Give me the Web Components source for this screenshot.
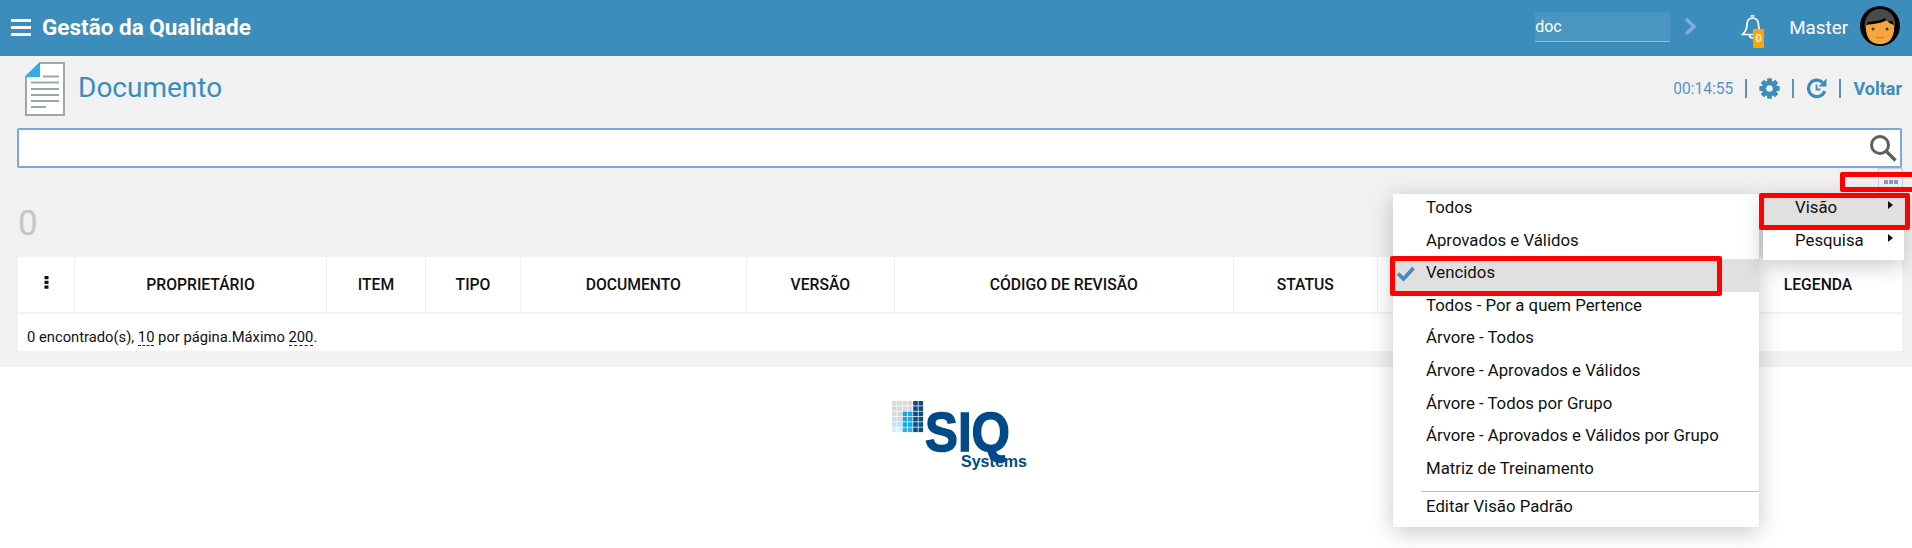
<!DOCTYPE html>
<html lang="pt"><head><meta charset="utf-8"><title>Documento</title>
<style>
html,body{margin:0;padding:0;background:#fff;font-family:Roboto,"Liberation Sans",sans-serif;color:#111;overflow:hidden}
body{width:1912px;height:548px;position:relative}
</style></head><body>
<app-header></app-header>
<gray-area>
  <title-bar></title-bar>
  <search-bar></search-bar>
  <dots-bar></dots-bar>
  <count-label>0</count-label>
  <data-table></data-table>
</gray-area>
<site-footer></site-footer>
<drop-menu id="m1" style="--l:1393px;--t:194px;--w:366px"></drop-menu>
<drop-menu id="m2" style="--l:1763px;--t:194px;--w:141px"></drop-menu>
<red-box style="--l:1840px;--t:172px;--w:80px;--h:20px"></red-box>
<red-box style="--l:1759px;--t:193px;--w:151px;--h:37px"></red-box>
<red-box style="--l:1390px;--t:256px;--w:332px;--h:40px"></red-box>
<script>
function def(name,html,init){
  customElements.define(name,class extends HTMLElement{
    constructor(){super();this.attachShadow({mode:'open'}).innerHTML=html;}
    connectedCallback(){if(init)init(this);}
  });
}
def('app-header',`<style>
:host{display:flex;align-items:center;height:56px;background:#3c8dbc;color:#fff;padding:0 12px 0 11px;box-sizing:border-box}
.brand{font:700 22.500px Roboto,sans-serif;margin-left:11px;white-space:nowrap;position:relative;top:-1px}
.sp{flex:1}
.inp{width:135px;height:30px;box-sizing:border-box;background:rgba(255,255,255,.08);border-bottom:1px solid #8fbbe6;font:400 16px/30px Roboto,sans-serif;margin-top:-3px}
svg{display:block}
.ch{margin:-4px 0 0 15px}
.bell{position:relative;margin:8px 0 0 44px;width:24px;height:34px}
.badge{position:absolute;left:12px;top:14px;width:11px;height:19px;background:#ffa500;border-radius:1px;font:500 11px/19px Roboto,sans-serif;text-align:center}
.name{font:400 18.800px Roboto,sans-serif;margin:-1px 12px 0 24px}
.av{margin-top:-4px}
</style>
<svg width="20" height="17" viewBox="0 0 20 17" style="margin-top:-2px"><path d="M0 0h20v3H0zM0 7h20v3H0zM0 14h20v3H0z" fill="#fff"/></svg>
<span class="brand">Gestão da Qualidade</span><span class="sp"></span>
<div class="inp">doc</div>
<svg class="ch" width="12" height="17" viewBox="0 0 12 17"><path d="M1 1l8 7.500l-8 7.500" fill="none" stroke="#82abdc" stroke-width="3.400"/></svg>
<div class="bell"><svg width="24" height="26" viewBox="0 0 24 26"><path d="M10 1.500a1.800 1.800 0 0 1 3 0M11.500 3c-4 0-5.500 3-5.500 7c0 5-2 7-4.500 9.500h20c-2.500-2.500-4-4.500-4-9.500c0-4-2-7-6-7zM8.500 20a3 3 0 0 0 6 0" fill="none" stroke="#fff" stroke-width="1.700"/></svg><span class="badge">0</span></div>
<span class="name">Master</span>
<svg class="av" width="40" height="40" viewBox="0 0 40 40"><circle cx="20" cy="20" r="20" fill="#050505"/><path d="M6 25C8 36 14 38 20 38s12-2 14-13v-6c-4-1-6-3-7-5c-5 3-13 4-21 5z" fill="#f5a73f"/><path d="M5 23c-2-12 6-20 15-20s17 7 15 20c-1-3-2-6-3-8c-5 1-6-1-7-3c-5 3-11 3-17 4c-1 2-2 4-3 7z" fill="#4a4a4c"/><circle cx="13" cy="23" r="1.500" fill="#5a3410"/><circle cx="27" cy="23" r="1.500" fill="#5a3410"/><path d="M16 31q4 2 8 0" fill="none" stroke="#c9771d" stroke-width="1.200"/></svg>`);

def('gray-area',`<style>:host{display:block;background:#f1f1f1;height:311px;box-sizing:border-box}</style><slot></slot>`);

def('title-bar',`<style>
:host{display:flex;align-items:center;height:72px;box-sizing:border-box;padding:0 10px 9px 25px;color:#3c8dbc}
.t{font:400 28px Roboto,sans-serif;margin-left:13px}
.sp{flex:1}
.time{font:400 15.600px Roboto,sans-serif;color:#5a94c6}
.sep{width:2px;height:19px;background:#5a94c6;margin:0 12px}
.v{font:700 18px Roboto,sans-serif}
svg{display:block}
.r{display:flex;align-items:center;margin-top:2px}
</style>
<svg width="40" height="54" viewBox="0 0 40 54" style="margin-top:3px"><path d="M1 14.500L15 1h24v52H1z" fill="#fff" stroke="#9ba8ae" stroke-width="2"/><path d="M0 15L15 0v15z" fill="#2eaee6"/><path d="M18 14.500h16M6 20.500h28M6 27h28M6 33h28M6 39h28M6 45h15" stroke="#9aa6ab" stroke-width="2"/></svg>
<span class="t">Documento</span><span class="sp"></span>
<div class="r"><span class="time">00:14:55</span><i class="sep"></i>
<svg width="21" height="21" viewBox="-10.500 -10.500 21 21"><g fill="#3c8dbc"><circle r="7.800"/><rect x="-2.400" y="-10.200" width="4.800" height="20.400" rx=".8"/><rect x="-2.400" y="-10.200" width="4.800" height="20.400" rx=".8" transform="rotate(45)"/><rect x="-2.400" y="-10.200" width="4.800" height="20.400" rx=".8" transform="rotate(90)"/><rect x="-2.400" y="-10.200" width="4.800" height="20.400" rx=".8" transform="rotate(135)"/></g><circle r="3.300" fill="#f1f1f1"/></svg><i class="sep"></i>
<svg width="21" height="21" viewBox="0 0 21 21"><path d="M16.500 4.300A8.300 8.300 0 1 0 18.700 13" fill="none" stroke="#3c8dbc" stroke-width="3.200"/><path d="M20.500 0.500v8h-8z" fill="#3c8dbc"/><path d="M10.500 6.500v5h4" fill="none" stroke="#3c8dbc" stroke-width="1.800"/></svg><i class="sep"></i>
<span class="v">Voltar</span></div>`);

def('search-bar',`<style>
:host{display:flex;justify-content:flex-end;align-items:center;height:40px;box-sizing:border-box;margin:0 10px 0 17px;background:#fff;border:2px solid #7fa6e0;border-radius:2px;padding-right:3px}
svg{display:block}
</style><svg width="28" height="28" viewBox="0 0 28 28"><circle cx="11" cy="11" r="8.500" fill="none" stroke="#5f5f5f" stroke-width="3"/><path d="M17 17l9.500 9.500" stroke="#5f5f5f" stroke-width="3.400"/></svg>`);

def('dots-bar',`<style>
:host{display:flex;justify-content:flex-end;height:26px;margin-right:9px}
.b{width:25px;box-sizing:border-box;border:1px solid #cfcfcf;border-width:1px 1px 0 1px;display:flex;align-items:center;justify-content:center;gap:1px}
i{width:4px;height:4px;background:#7f9fc4}
</style><div class="b"><i></i><i></i><i></i></div>`);

def('count-label',`<style>:host{display:block;height:63px;box-sizing:border-box;padding:9px 0 0 18px;font:400 35px/42px Roboto,sans-serif;color:#c6c6c6}</style><slot></slot>`);

const cols=[['',57],['PROPRIETÁRIO',252],['ITEM',99],['TIPO',95],['DOCUMENTO',225.5],['VERSÃO',148.5],['CÓDIGO DE REVISÃO',338.5],['STATUS',144.5],['',356],['LEGENDA',168]];
def('data-table',`<style>
:host{display:block;margin:0 10px 0 18px;font-family:Roboto,sans-serif}
.h{display:grid;grid-template-columns:${cols.map(c=>c[1]+'px').join(' ')};height:55px;background:#fff;margin-bottom:2px}
.c{display:flex;align-items:center;justify-content:center;font-weight:500;font-size:15.700px;color:#111;border-right:1.500px solid #f1f1f1;box-sizing:border-box;padding-bottom:1px}
.c:last-child{border-right:0}
.f{height:37px;background:#fff;box-sizing:border-box;padding:0 9px;font:400 14.750px/46px Roboto,sans-serif;overflow:hidden;color:#111}
.f span{display:inline-block;line-height:16px;border-bottom:1.500px dashed #222}
svg{display:block;margin-top:-3px}
</style><div class="h">${cols.map((c,i)=>`<div class="c">${i==0?'<svg width="5" height="13" viewBox="0 0 5 13"><path d="M0.500 0h4v3.200h-4zM0.500 4.800h4V8h-4zM0.500 9.600h4v3.200h-4z" fill="#111"/></svg>':c[0]}</div>`).join('')}</div>
<div class="f">0 encontrado(s), <span>10</span> por página.Máximo <span>200</span>.</div>`);

const cells=[];
for(let r=0;r<6;r++)for(let c=0;c<6;c++){
  let f='#d9d9d9';
  if(c>=4)f='#0f4c86';
  else if(c>=2&&r>=2)f=r>=5?'#35aee8':'#1ea5e6';
  else if(r==4)f='#bfe3f8';
  else if(r==5)f='#d8effb';
  cells.push(`<rect x="${c*5.3}" y="${r*5.3}" width="4.600" height="4.600" fill="${f}"/>`);
}
def('site-footer',`<style>:host{display:flex;justify-content:center;padding:34px 0 0 8px}svg{display:block}
text{font-family:"Liberation Sans",Arial,sans-serif;font-weight:700;fill:#004a87}</style>
<svg width="138" height="84" viewBox="0 0 138 84" style="margin-left:2px"><g>${cells.join('')}</g>
<text x="33" y="50" font-size="56" textLength="85" lengthAdjust="spacingAndGlyphs" stroke="#004a87" stroke-width="1.500">SIQ</text>
<text x="69" y="66" font-size="17" textLength="66" lengthAdjust="spacingAndGlyphs">Systems</text></svg>`);

def('drop-menu',`<style>
:host{position:absolute;left:var(--l);top:var(--t);width:var(--w);background:#fff;box-shadow:0 5px 22px rgba(0,0,0,.22);font:400 16.800px Roboto,sans-serif;color:#111}
.r{position:relative;height:32.600px;line-height:26.500px;box-sizing:border-box;white-space:nowrap}
.on{background:#e0e0e0}
.ck{position:absolute;left:4px;top:6px}
.ar{position:absolute;right:11px;top:7px;width:0;height:0;border:4.500px solid transparent;border-left:5px solid #111;border-right:0}
hr{margin:4px 0 0 28px;border:0;border-top:1.500px solid #bdbdbd;height:0}
.e{padding-bottom:5px;height:35px;line-height:29px}
</style><div id="b"></div>`,el=>{
  const b=el.shadowRoot.getElementById('b');
  const ck='<svg class="ck" width="18" height="16" viewBox="0 0 18 16"><path d="M1 8.500l5.500 5.500L16.500 3" fill="none" stroke="#3f8fc6" stroke-width="3.800"/></svg>';
  if(el.id=='m1'){
    const it=['Todos','Aprovados e Válidos','Vencidos','Todos - Por a quem Pertence','Árvore - Todos','Árvore - Aprovados e Válidos','Árvore - Todos por Grupo','Árvore - Aprovados e Válidos por Grupo','Matriz de Treinamento'];
    b.innerHTML=it.map((t,i)=>`<div class="r${i==2?' on':''}" style="padding-left:33px">${i==2?ck:''}${t}</div>`).join('')+'<hr><div class="r e" style="padding-left:33px">Editar Visão Padrão</div>';
  }else{
    b.innerHTML=['Visão','Pesquisa'].map((t,i)=>`<div class="r${i==0?' on':''}" style="padding-left:32px;height:33px">${t}<i class="ar"></i></div>`).join('');
  }
});
def('red-box',`<style>:host{position:absolute;left:var(--l);top:var(--t);width:var(--w);height:var(--h);box-sizing:border-box;border:5px solid #f00;border-radius:2px;pointer-events:none}</style>`);
</script></body></html>
